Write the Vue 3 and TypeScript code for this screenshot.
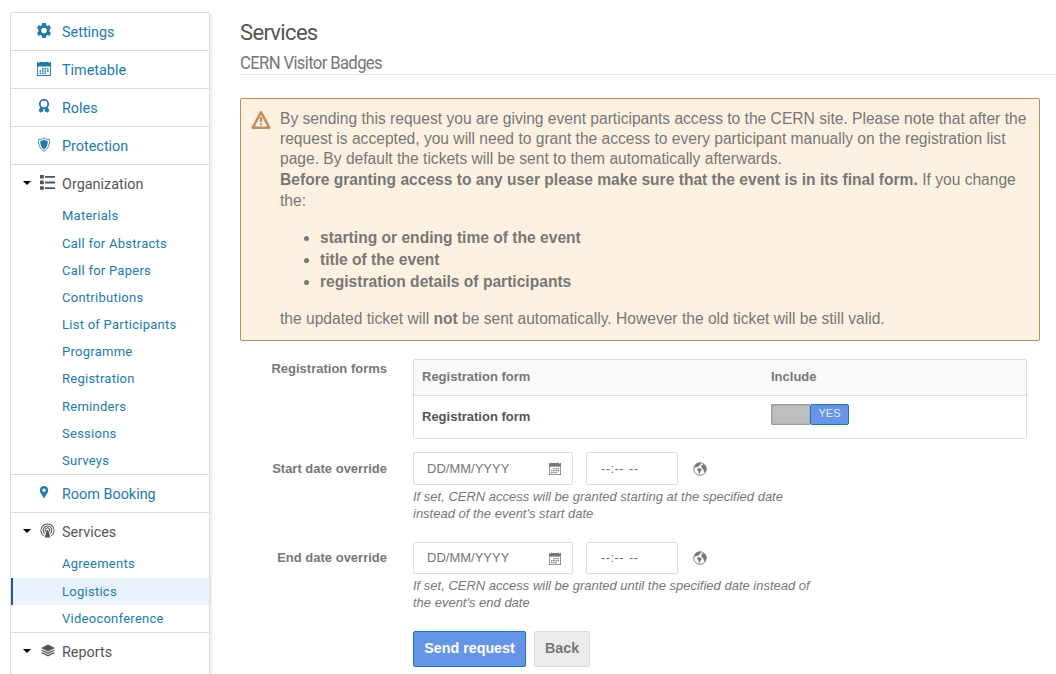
<script setup lang="ts">
interface MenuSection {
  title: string
  icon: string
  items?: string[]
}

const sections: MenuSection[] = [
  { title: 'Settings', icon: 'gear' },
  { title: 'Timetable', icon: 'calendar' },
  { title: 'Roles', icon: 'medal' },
  { title: 'Protection', icon: 'shield' },
  {
    title: 'Organization',
    icon: 'list',
    items: [
      'Materials',
      'Call for Abstracts',
      'Call for Papers',
      'Contributions',
      'List of Participants',
      'Programme',
      'Registration',
      'Reminders',
      'Sessions',
      'Surveys',
    ],
  },
  { title: 'Room Booking', icon: 'pin' },
  { title: 'Services', icon: 'broadcast', items: ['Agreements', 'Logistics', 'Videoconference'] },
  { title: 'Reports', icon: 'stack', items: [] },
]

const activeItem = 'Logistics'

const overrides = [
  {
    label: 'Start date override',
    help: "If set, CERN access will be granted starting at the specified date instead of the event's start date",
  },
  {
    label: 'End date override',
    help: "If set, CERN access will be granted until the specified date instead of the event's end date",
  },
]
</script>

<template>
  <div class="page">
    <svg class="defs" width="0" height="0">
      <symbol id="gear" viewBox="0 0 14 15">
        <path fill-rule="evenodd" d="M5.200 0h3.600l.5 2.200 1.200.7 2-.8 1.500 3L12.500 6.600v1.800L14 9.900l-1.500 3-2-.8-1.200.7L8.800 15H5.200l-.5-2.200-1.200-.7-2 .8L0 9.900l1.500-1.500V6.600L0 5.100l1.500-3 2 .8 1.200-.7zM7 4.800a2.700 2.700 0 1 0 0 5.400 2.700 2.700 0 0 0 0-5.400z" />
      </symbol>
      <symbol id="calendar" viewBox="0 0 14 15">
        <path d="M0 1h1.500v1h1V0.500h1V1h7V.5h1V2h1V1H14v4H0z" />
        <path fill-rule="evenodd" d="M0 5h14v10H0zM.9 5.500v8.600h12.200V5.500z" />
        <path d="M5 7h1.600v1.500H5zM7.500 7h1.600v1.500H7.500zM10 7h1.600v1.500H10zM2.500 9.300h1.600v1.500H2.500zM5 9.300h1.600v1.500H5zM7.500 9.300h1.600v1.500H7.500zM10 9.300h1.600v1.500H10zM2.500 11.600h1.600v1.400H2.500zM5 11.600h1.600v1.400H5zM7.500 11.600h1.600v1.400H7.500z" />
      </symbol>
      <symbol id="medal" viewBox="0 0 12 14">
        <circle cx="6" cy="5" r="4.200" fill="none" stroke="currentColor" stroke-width="1.800" />
        <path d="M2.200 8.200 5.500 9.800 5 13.500 3.700 12.400 2.500 14 1.900 12.500.3 12.600zM9.800 8.200 6.500 9.800 7 13.500 8.300 12.400 9.500 14 10.100 12.500 11.700 12.600z" />
      </symbol>
      <symbol id="shield" viewBox="0 0 14 16">
        <path d="M7 .8C5.500 2 3.500 2.700 1.200 2.700 1 8.500 2.300 12.500 7 15.200 11.700 12.500 13 8.500 12.800 2.700 10.500 2.700 8.500 2 7 .8z" fill="none" stroke="currentColor" stroke-width=".9" />
        <path d="M7 2.700C5.900 3.500 4.500 4 3 4.200c0 4.300 1 7.200 4 9.200 3-2 4-4.900 4-9.200C9.500 4 8.100 3.500 7 2.700z" />
      </symbol>
      <symbol id="list" viewBox="0 0 15 15">
        <path d="M0 0h3.800v3.600H0zM0 5.600h3.800v3.600H0zM0 11.200h3.800v3.600H0zM5 1h10v1.800H5zM5 6.600h10v1.800H5zM5 12.200h10v1.800H5z" />
      </symbol>
      <symbol id="pin" viewBox="0 0 10 14">
        <path fill-rule="evenodd" d="M5 0a4.600 4.600 0 0 0-4.600 4.600C.4 7.500 3.500 10 5 13.500 6.500 10 9.600 7.500 9.600 4.600A4.600 4.600 0 0 0 5 0zM5 2.700a1.900 1.900 0 1 1 0 3.800 1.900 1.900 0 0 1 0-3.800z" />
      </symbol>
      <symbol id="broadcast" viewBox="0 0 16 16">
        <g fill="none" stroke="currentColor" stroke-width="1.100">
          <path d="M4 13.700a7 7 0 1 1 8 0" />
          <path d="M5 11.300a4.600 4.600 0 1 1 6 0" />
          <path d="M6.200 9.200a2.400 2.400 0 1 1 3.600 0" />
        </g>
        <path d="M7.200 7.500h1.600L11 15.500H5z" />
      </symbol>
      <symbol id="stack" viewBox="0 0 16 14">
        <path d="M8 0 16 4 8 8 0 4z" />
        <path d="M1.600 6 8 9.200 14.400 6 16 6.900 8 10.900 0 6.900zM1.600 8.900 8 12.100l6.400-3.200 1.600.9-8 4-8-4z" />
      </symbol>
      <symbol id="warning" viewBox="0 0 20 20">
        <path d="M10 2.200 18.300 17.700H1.700z" fill="none" stroke="currentColor" stroke-width="2.500" stroke-linejoin="round" />
        <path d="M8.900 7h2.200v5H8.900zM8.900 13.200h2.200v2H8.900z" />
      </symbol>
      <symbol id="globe" viewBox="0 0 14 14">
        <circle cx="7" cy="7" r="6.300" fill="none" stroke="currentColor" stroke-width=".9" />
        <path d="M1.400 4.600 2.800 2.200 5 1 7.500 1.100 8 2 6.600 3.200 5.200 4.700 3.600 5 2.600 5.600 1.600 5.900zM4.400 6.400 6.200 5.900 8.600 7.100 8.200 8.800 7.100 10 6.600 12.400 5.800 11.800 5.500 9.400 4.300 8.100zM8.600 3.200 10.500 1.900 12.500 3.700 13.300 6.700 12.300 9.800 11.200 10.400 10.700 9.200 10.500 7.400 9.200 6.500 8.300 5z" />
      </symbol>
    </svg>

    <nav class="sidebar">
      <section v-for="section in sections" :key="section.title" class="section">
        <div class="heading" :class="{ group: section.items }">
          <span class="caret"><i v-if="section.items" /></span>
          <span class="icon-slot">
            <svg :class="['icon', section.icon]"><use :href="'#' + section.icon" /></svg>
          </span>
          <span class="title">{{ section.title }}</span>
        </div>
        <ul v-if="section.items" class="items">
          <li v-for="item in section.items" :key="item" :class="{ active: item === activeItem }">{{ item }}</li>
        </ul>
      </section>
    </nav>

    <main class="content">
      <h1>Services</h1>
      <h2><span>CERN Visitor Badges</span></h2>

      <div class="warning-box">
        <svg class="warning-icon"><use href="#warning" /></svg>
        <div class="message">
          By sending this request you are giving event participants access to the CERN site. Please note that after the
          request is accepted, you will need to grant the access to every participant manually on the registration list
          page. By default the tickets will be sent to them automatically afterwards.<br />
          <strong class="lead">Before granting access to any user please make sure that the event is in its final form.</strong> If
          you change the:
          <ul>
            <li>starting or ending time of the event</li>
            <li>title of the event</li>
            <li>registration details of participants</li>
          </ul>
          the updated ticket will <strong>not</strong> be sent automatically. However the old ticket will be still valid.
        </div>
      </div>

      <form class="form" @submit.prevent>
        <div class="row forms-row">
          <label>Registration forms</label>
          <div class="table">
            <div class="table-head"><span>Registration form</span><span>Include</span></div>
            <div class="table-row">
              <span>Registration form</span>
              <span class="toggle"><span class="off" /><span class="on">YES</span></span>
            </div>
          </div>
        </div>

        <div v-for="field in overrides" :key="field.label" class="row date-row">
          <label>{{ field.label }}</label>
          <div>
            <div class="inputs">
              <div class="date-input">
                <span>DD/MM/YYYY</span>
                <svg class="calendar-icon"><use href="#calendar" /></svg>
              </div>
              <div class="time-input">--:-- --</div>
              <svg class="globe-icon"><use href="#globe" /></svg>
            </div>
            <p class="help">{{ field.help }}</p>
          </div>
        </div>

        <div class="actions">
          <button class="primary">Send request</button>
          <button>Back</button>
        </div>
      </form>
    </main>
  </div>
</template>

<style>
body {
  margin: 0;
  background: #fff;
}
</style>

<style scoped>
.page {
  display: flex;
  align-items: flex-start;
  box-sizing: border-box;
  width: 1056px;
  height: 674px;
  overflow: hidden;
  padding: 12px 0 0 10px;
  font-family: 'Liberation Sans', Arial, sans-serif;
  color: #777;
}
.defs {
  position: absolute;
}
svg {
  fill: currentColor;
}
.sidebar {
  box-sizing: border-box;
  flex: none;
  width: 200px;
  height: 700px;
  border: 1px solid #ddd;
  border-radius: 2px;
  box-shadow: 2px 2px 0 #eee;
  font-family: Roboto, sans-serif;
}
.section {
  border-bottom: 1px solid #ddd;
}
.section:last-child {
  border-bottom: 0;
}
.heading {
  display: flex;
  align-items: center;
  height: 37px;
  font-size: 14.4px;
  color: #217bad;
}
.heading.group {
  height: 37.39px;
  color: #555;
}
.title {
  padding-top: 1.4px;
}
.caret {
  width: 20px;
  display: flex;
  justify-content: flex-end;
  margin-top: -1.5px;
}
.caret i {
  border: 4px solid transparent;
  border-top-color: #000;
  border-bottom: 0;
}
.icon-slot {
  display: flex;
  justify-content: center;
  width: 26px;
  margin-right: 5px;
}
.group .icon-slot {
  width: 33.4px;
  margin-right: -2.4px;
}
.icon {
  width: 14px;
  height: 15px;
  margin-top: -2px;
}
.icon.medal {
  width: 12px;
  height: 14px;
  margin-top: -3px;
}
.icon.list,
.icon.broadcast {
  width: 15px;
}
.icon.pin {
  width: 10px;
  height: 13px;
  margin-top: -3px;
}
.icon.stack {
  height: 13px;
}
.items {
  margin: 0;
  padding: 0;
  list-style: none;
}
.items li {
  box-sizing: border-box;
  height: 27.18px;
  padding-left: 51px;
  font-size: 13px;
  line-height: 27px;
  letter-spacing: 0.26px;
  color: #217bad;
}
.items .active {
  border-left: 2px solid #1c5d96;
  padding-left: 49px;
  background: #eaf2fc;
}
.content {
  flex: 1;
  min-width: 0;
  margin-left: 30px;
}
h1,
h2 {
  margin: 0;
  font-family: Roboto, sans-serif;
  font-weight: 400;
}
h1 {
  height: 38px;
  font-size: 22px;
  line-height: 41px;
  letter-spacing: -0.67px;
  color: #555;
}
h2 {
  height: 24px;
  border-bottom: 1px solid #e8e8e8;
  font-size: 18px;
  line-height: 25px;
  letter-spacing: -0.7px;
}
h2 span {
  display: inline-block;
  transform: scaleX(0.927);
  transform-origin: left;
}
.warning-box {
  box-sizing: border-box;
  display: flex;
  width: 800px;
  height: 243px;
  margin-top: 23px;
  padding: 9px 10px 0;
  border: 1px solid #bb8c57;
  border-radius: 2px;
  background: #fef1e1;
}
.warning-icon {
  flex: none;
  width: 20px;
  height: 20px;
  margin: 2px 9px 0 0;
  color: #c08f5c;
}
.message {
  padding-top: 0.57px;
  font-size: 15.6px;
  line-height: 20.28px;
}
.lead {
  line-height: 21.5px;
}
.message ul {
  margin: 15.6px 0 16.2px;
  padding-left: 40px;
  font-weight: 700;
  line-height: 22px;
}
.form {
  padding-top: 18px;
  font-size: 13px;
}
.row {
  display: grid;
  grid-template-columns: 147px 1fr;
  column-gap: 26px;
}
label {
  text-align: right;
  font-weight: 700;
  line-height: 19px;
}
.table {
  box-sizing: border-box;
  width: 614px;
  height: 80px;
  border: 1px solid #ddd;
  border-radius: 2px;
  font-weight: 700;
}
.table-head,
.table-row {
  display: grid;
  grid-template-columns: 349px 1fr;
  padding-left: 8px;
}
.table-head {
  height: 35px;
  border-bottom: 1px solid #ddd;
  background: #f9f9f9;
  line-height: 34px;
}
.table-row {
  height: 42px;
  line-height: 41px;
  color: #555;
}
.toggle {
  display: flex;
  width: 78px;
  height: 21px;
  margin-top: 8px;
  font-size: 11px;
  font-weight: 400;
  line-height: 16px;
}
.off {
  box-sizing: border-box;
  width: 39px;
  border: 1px solid #999;
  border-right: 0;
  border-radius: 2px 0 0 2px;
  background: #bebebe;
  box-shadow: inset 0 0 2px #999;
}
.on {
  box-sizing: border-box;
  width: 39px;
  border: 1px solid #1f78ab;
  border-radius: 2px;
  background: #6694e6;
  text-align: center;
  color: #e8effb;
}
.date-row {
  height: 89.5px;
}
.forms-row + .date-row {
  margin-top: 12.8px;
}
.date-row label {
  line-height: 33px;
}
.inputs {
  display: flex;
  align-items: center;
  height: 32.6px;
  margin-top: 0.2px;
}
.date-input,
.time-input {
  box-sizing: border-box;
  display: flex;
  align-items: center;
  height: 32.5px;
  border: 1px solid #ddd;
  border-radius: 2px;
}
.date-input {
  justify-content: space-between;
  width: 160px;
  padding: 0 11px 0 13px;
}
.time-input {
  width: 92px;
  margin: 0 15px 0 13px;
  padding-left: 14px;
  letter-spacing: 0.4px;
  word-spacing: 1px;
}
.calendar-icon {
  width: 12px;
  height: 13px;
  margin-top: 1px;
}
.globe-icon {
  width: 14px;
  height: 14px;
  margin-top: 1px;
}
.help {
  width: 410px;
  margin: 3.2px 0 0;
  font-style: italic;
  line-height: 17px;
}
.actions {
  display: flex;
  gap: 8px;
  margin-left: 173px;
}
button {
  box-sizing: border-box;
  width: 56px;
  height: 36px;
  padding: 0 0 2px;
  border: 1px solid #ddd;
  border-radius: 2px;
  background: #ebebeb;
  font: 700 14.3px 'Liberation Sans', Arial, sans-serif;
  color: #777;
}
button.primary {
  width: 113px;
  border-color: #1f78ab;
  background: #6694e6;
  color: #fff;
}
</style>
